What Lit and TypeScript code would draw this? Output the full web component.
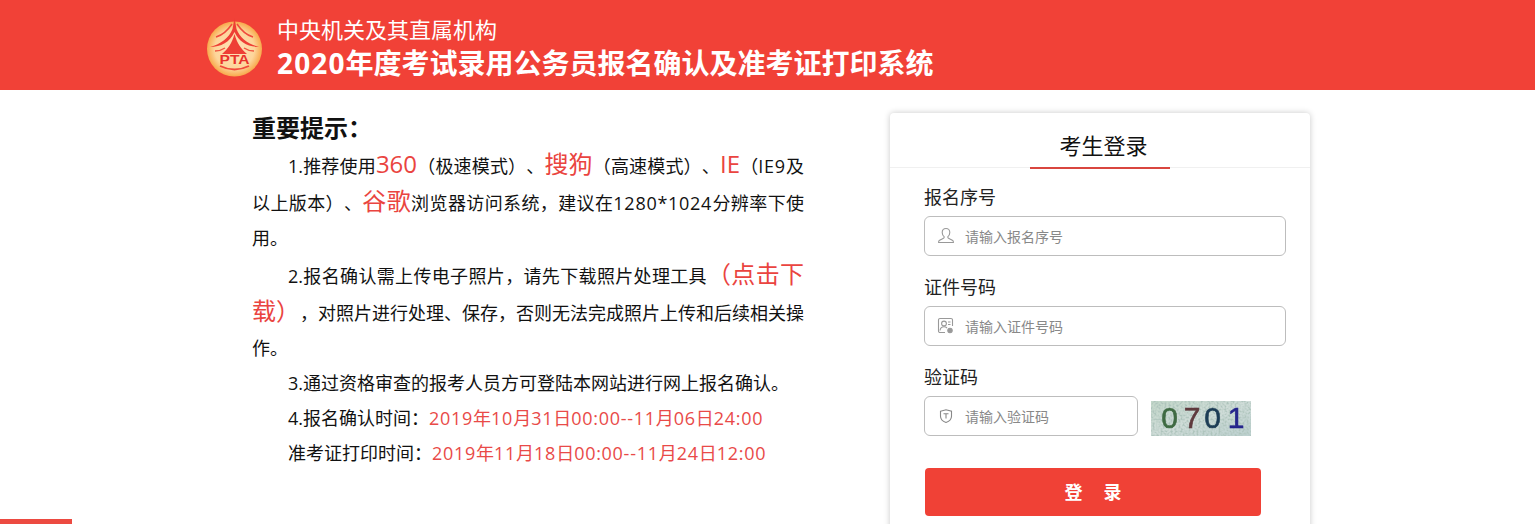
import { LitElement, html, css } from "lit";
import { customElement } from "lit/decorators.js";

const latin = (text: string) =>
  text.split(/([0-9A-Za-z:*.\-]+)/).map((part, i) => (i % 2 ? html`<span class="n">${part}</span>` : part));

@customElement("app-root")
export class AppRoot extends LitElement {
  static styles = css`
    :host { display: block; width: 1535px; height: 524px; overflow: hidden; position: relative; background: #fff;
      font-family: "Open Sans", "Noto Sans CJK SC", sans-serif; color: #111; text-spacing-trim: space-all; }
    * { box-sizing: border-box; }
    .n { letter-spacing: .04em; }
    .header { height: 90px; background: #f14137; display: flex; align-items: center; padding-left: 207px; gap: 14px; color: #fff; }
    .logo { width: 56px; height: 62px; flex: none; display: block; margin-top: 1px; }
    .titles { display: flex; flex-direction: column; margin-top: 4px; }
    .t1 { font-size: 22px; line-height: 32px; }
    .t2 { font-size: 28px; line-height: 36px; font-weight: 700; }
    .main { display: flex; align-items: flex-start; padding-left: 252px; }
    .notice { width: 552px; flex: none; padding-top: 20px; font-size: 18px; line-height: 35px; }
    .notice h2 { margin: 0 0 1px; font-size: 24px; line-height: 36px; font-weight: 700; }
    .notice p { margin: 0; text-indent: 36px; text-align: justify; }
    .notice .second { margin-top: 1px; }
    .notice .r { color: #e94a48; }
    .notice .b { color: #ea4440; font-size: 24px; line-height: 34px; }
    .card { width: 420px; height: 440px; margin: 23px 0 0 86px; flex: none; background: #fff; border-radius: 4px;
      box-shadow: 0 0 6px rgba(0,0,0,.22); }
    .card-head { height: 55px; border-bottom: 1px solid #f0f0f0; display: flex; justify-content: center; }
    .card-title { width: 140px; height: 56px; padding-left: 7px; border-bottom: 2px solid #d9463f; text-align: center; font-size: 22px; line-height: 64px; color: #111; }
    .form { padding: 12px 24px 0 34px; }
    .label { font-size: 18px; line-height: 34px; height: 36px; color: #222; }
    .row { display: flex; align-items: center; margin-bottom: 14px; }
    .input { width: 362px; height: 40px; border: 1px solid #bdbdbd; border-radius: 6px; display: flex; align-items: center; padding-left: 12px; font-size: 14px; color: #888; }
    .input.short { width: 214px; }
    .input svg { width: 18px; height: 18px; flex: none; margin-right: 10px; }
    .captcha { width: 100px; height: 35px; margin: 5px 0 0 13px; display: block; flex: none; overflow: visible; }
    .btn { width: 336px; height: 48px; margin: 32px 0 0 1px; padding-bottom: 3px; background: #f04136; border-radius: 4px; color: #fff; display: flex; align-items: center; justify-content: center; font-size: 18px; font-weight: 700; gap: 21px; }
    .bar { position: absolute; left: 0; bottom: 0; width: 72px; height: 5px; background: #ec4a41; }
  `;

  render() {
    return html`
      <div class="header">
        <svg class="logo" viewBox="0 0 56 62">
          <defs>
            <radialGradient id="lg" cx=".5" cy=".5" r=".5">
              <stop offset="0" stop-color="#ffe3bb"/><stop offset=".72" stop-color="#fdd59a"/><stop offset="1" stop-color="#f8a94c"/>
            </radialGradient>
          </defs>
          <circle cx="27.500" cy="34" r="27.500" fill="url(#lg)"/>
          <path d="M27.500 3 L29.500 14 C33 23 41 29 52 32 C41 32 32 27 27.500 17 C23 27 14 32 3 32 C14 29 22 23 25.500 14 Z" fill="#ee3f35"/>
          <path d="M27.500 19 C25 28 21 34 15 39 L40 39 C34 34 30 28 27.500 19 Z" fill="#ee3f35"/>
          <path d="M9 22 C16 20 21 15 25 9 M46 22 C39 20 34 15 30 9" fill="none" stroke="#f04a3c" stroke-width="1.500"/>
          <path d="M8 36 C12 36 15 35 18 33 M47 36 C43 36 40 35 37 33" fill="none" stroke="#f0553f" stroke-width="1.400"/>
          <text x="27.500" y="48.500" text-anchor="middle" font-family="Liberation Sans" font-size="12.500" font-weight="700" fill="#e8332c" textLength="30" lengthAdjust="spacingAndGlyphs">PTA</text>
          <path d="M13 51 Q27.500 58 42 51" fill="none" stroke="#f04a3c" stroke-width="1.800"/>
        </svg>
        <div class="titles">
          <div class="t1">中央机关及其直属机构</div>
          <div class="t2">${latin("2020年度考试录用公务员报名确认及准考证打印系统")}</div>
        </div>
      </div>
      <div class="main">
        <div class="notice">
          <h2>重要提示：</h2>
          <p>1.推荐使用<span class="b">360</span>（极速模式）、<span class="b">搜狗</span>（高速模式）、<span class="b">IE</span>（${latin("IE9")}及以上版本）、<span class="b">谷歌</span>${latin("浏览器访问系统，建议在1280*1024分辨率下使用。")}</p>
          <p class="second">2.报名确认需上传电子照片，请先下载照片处理工具<span class="b">（点击下载）</span>，对照片进行处理、保存，否则无法完成照片上传和后续相关操作。</p>
          <p>3.通过资格审查的报考人员方可登陆本网站进行网上报名确认。</p>
          <p>4.报名确认时间：<span class="r">${latin("2019年10月31日00:00--11月06日24:00")}</span></p>
          <p>准考证打印时间：<span class="r">${latin("2019年11月18日00:00--11月24日12:00")}</span></p>
        </div>
        <div class="card">
          <div class="card-head"><div class="card-title">考生登录</div></div>
          <div class="form">
            <div class="label">报名序号</div>
            <div class="row"><div class="input">
              <svg viewBox="0 0 18 18" fill="none" stroke="#999" stroke-width="1.100"><path d="M9 1.500c-2.400 0-3.800 1.800-3.800 4 0 1.800.8 3.200 1.900 4.100v1.200c0 .7-3.900 1.600-5 2.900-.4.5-.5 1.200-.5 1.800h14.800c0-.6-.1-1.300-.5-1.800-1.100-1.300-5-2.200-5-2.900V9.600c1.100-.9 1.900-2.300 1.900-4.100 0-2.200-1.400-4-3.800-4z"/></svg>
              请输入报名序号</div></div>
            <div class="label">证件号码</div>
            <div class="row"><div class="input">
              <svg viewBox="0 0 18 18" fill="none" stroke="#999" stroke-width="1.100"><path d="M8 15.500H3a1.500 1.500 0 0 1-1.500-1.500V3A1.500 1.500 0 0 1 3 1.500h11A1.500 1.500 0 0 1 15.500 3v6"/><circle cx="7" cy="6.500" r="2.400"/><path d="M3 13.500c.4-2.400 2-3.700 4-3.700 1.200 0 2.200.4 3 1.200M11 5h2.500M11 7.500h2.500"/><circle cx="13" cy="13.500" r="2.200" fill="#999"/></svg>
              请输入证件号码</div></div>
            <div class="label">验证码</div>
            <div class="row"><div class="input short">
              <svg viewBox="0 0 18 18" fill="none" stroke="#888" stroke-width="1.100"><path d="M3.500 4.200 9 2.800l5.500 1.400v5c0 3-2.500 5.200-5.500 6.200-3-1-5.500-3.200-5.500-6.200z"/><path d="M6.500 6.800h5M9 6.800v4.700"/></svg>
              请输入验证码</div>
              <svg class="captcha" viewBox="0 0 100 35">
                <defs>
                  <linearGradient id="g" x1="0" x2="1" y1="0" y2="1">
                    <stop offset="0" stop-color="#c2d6c8"/><stop offset=".5" stop-color="#cfdcd8"/><stop offset="1" stop-color="#bcd0cf"/>
                  </linearGradient>
                  <filter id="n" x="0" y="0" width="100%" height="100%"><feTurbulence type="fractalNoise" baseFrequency=".5" numOctaves="3" seed="4"/><feColorMatrix values="0 0 0 0 .42  0 0 0 0 .55  0 0 0 0 .5  0 0 0 3 -1.250"/></filter>
                  <filter id="s"><feGaussianBlur stdDeviation=".4"/></filter>
                </defs>
                <rect width="100" height="35" fill="url(#g)"/>
                <rect width="100" height="35" filter="url(#n)"/>
                <g font-family="Liberation Sans" font-size="30" text-anchor="middle" stroke-width=".6" filter="url(#s)">
                  <text x="18.500" y="27" fill="#3f6b43" stroke="#3f6b43">0</text>
                  <text x="41" y="27" fill="#5e3a3e" stroke="#5e3a3e">7</text>
                  <text x="61.500" y="27" fill="#1e3d55" stroke="#1e3d55">0</text>
                  <text x="85" y="27" fill="#25258c" stroke="#25258c">1</text>
                </g>
              </svg>
            </div>
            <div class="btn"><span>登</span><span>录</span></div>
          </div>
        </div>
      </div>
      <div class="bar"></div>
    `;
  }
}
